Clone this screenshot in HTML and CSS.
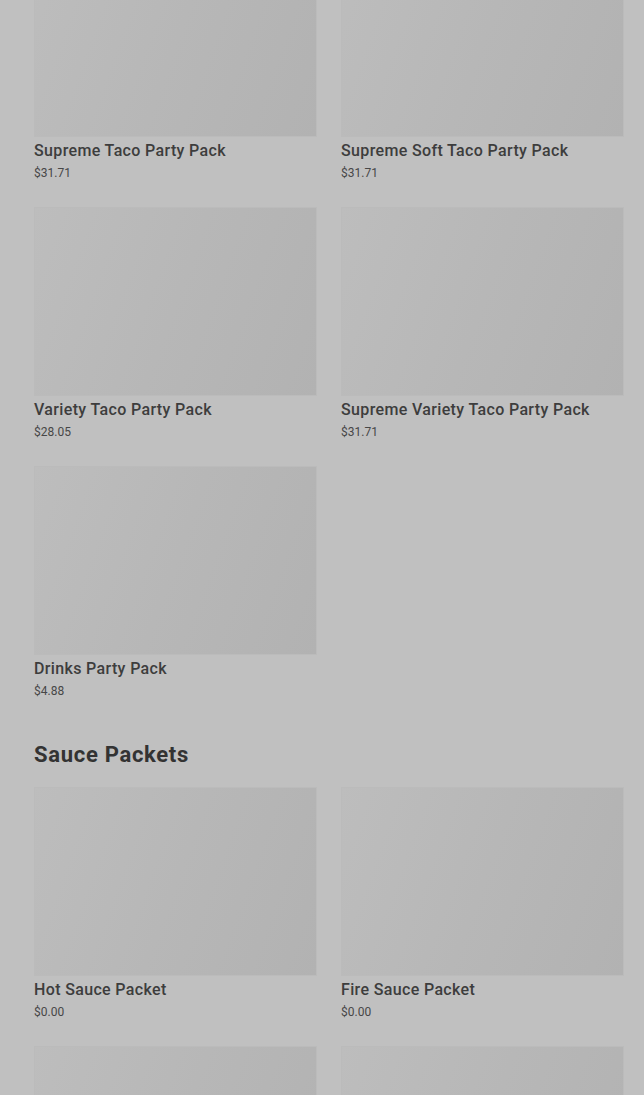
FILE: index.html
```html
<!DOCTYPE html>
<html lang="en">
<head>
  <meta charset="UTF-8" />
  <meta name="viewport" content="width=device-width, initial-scale=1.0" />
  <title>Party Packs</title>
  <link rel="stylesheet" href="styles.css">
</head>
<body>

  <!-- Party packs (scrolled part way down) -->
  <section class="menu-section first">
    <div class="grid">
      <div class="card">
        <div class="thumb"></div>
        <div class="name">Supreme Taco Party Pack</div>
        <div class="price">$31.71</div>
      </div>
      <div class="card">
        <div class="thumb"></div>
        <div class="name">Supreme Soft Taco Party Pack</div>
        <div class="price">$31.71</div>
      </div>
      <div class="card">
        <div class="thumb"></div>
        <div class="name">Variety Taco Party Pack</div>
        <div class="price">$28.05</div>
      </div>
      <div class="card">
        <div class="thumb"></div>
        <div class="name">Supreme Variety Taco Party Pack</div>
        <div class="price">$31.71</div>
      </div>
      <div class="card">
        <div class="thumb"></div>
        <div class="name">Drinks Party Pack</div>
        <div class="price">$4.88</div>
      </div>
    </div>
  </section>

  <section class="menu-section">
    <h2>Sauce Packets</h2>
    <div class="grid">
      <div class="card">
        <div class="thumb"></div>
        <div class="name">Hot Sauce Packet</div>
        <div class="price">$0.00</div>
      </div>
      <div class="card">
        <div class="thumb"></div>
        <div class="name">Fire Sauce Packet</div>
        <div class="price">$0.00</div>
      </div>
      <div class="card">
        <div class="thumb"></div>
      </div>
      <div class="card">
        <div class="thumb"></div>
      </div>
    </div>
  </section>

</body>
</html>
```

FILE: styles.css
```css
body {
  margin: 0;
  padding: 0 20px 0 34px;
  background: #c0c0c0;
  color: #3b3b3b;
  font-family: Roboto, 'Liberation Sans', sans-serif;
  overflow: hidden;
}

.menu-section.first {
  margin-top: -52px;
}

.menu-section h2 {
  margin: 41px 0 18px;
  font-size: 22px;
  line-height: 28px;
  font-weight: 700;
  color: #333;
  letter-spacing: 0.7px;
}

.grid {
  display: grid;
  grid-template-columns: 1fr 1fr;
  column-gap: 24px;
  row-gap: 25px;
}

.card {
  display: flex;
  flex-direction: column;
}

.thumb {
  height: 189px;
  background: linear-gradient(110deg, #bdbdbd 0%, #b7b7b7 50%, #b2b2b2 100%);
  box-shadow: inset 0 0 0 1px #bbbbbb;
}

.name {
  margin-top: 4px;
  font-size: 16px;
  line-height: 20px;
  font-weight: 500;
  color: #3d3d3d;
  letter-spacing: 0.35px;
}

.price {
  margin-top: 3px;
  font-size: 12px;
  line-height: 18px;
  color: #474747;
}
```
